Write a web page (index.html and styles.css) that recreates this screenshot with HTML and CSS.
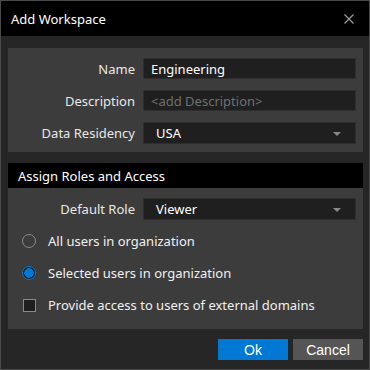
FILE: index.html
```html
<!DOCTYPE html>
<html>
<head>
<meta charset="utf-8">
<link rel="stylesheet" href="styles.css">
</head>
<body>
<div class="dialog">
  <div class="titlebar">
    <span class="title">Add Workspace</span>
    <svg class="close" width="10" height="10" viewBox="0 0 10 10"><path d="M0.5 0.5L9.5 9.5M9.5 0.5L0.5 9.5" stroke="#9a9a9a" stroke-width="1.3" fill="none"/></svg>
  </div>
  <div class="body">
    <div class="panel form">
      <label class="lbl">Name</label>
      <div class="field">Engineering</div>
      <label class="lbl">Description</label>
      <div class="field placeholder">&lt;add Description&gt;</div>
      <label class="lbl">Data Residency</label>
      <div class="field select">USA<span class="arrow"></span></div>
    </div>
    <div class="section">
      <div class="sec-head">Assign Roles and Access</div>
      <div class="panel access">
        <div class="form role">
          <label class="lbl">Default Role</label>
          <div class="field select">Viewer<span class="arrow"></span></div>
        </div>
        <div class="opt"><span class="radio"></span>All users in organization</div>
        <div class="opt"><span class="radio on"></span>Selected users in organization</div>
        <div class="opt"><span class="check"></span>Provide access to users of external domains</div>
      </div>
    </div>
    <div class="buttons">
      <button class="btn primary">Ok</button>
      <button class="btn">Cancel</button>
    </div>
  </div>
</div>
</body>
</html>
```
FILE: styles.css
```css
* { box-sizing: border-box; }
html, body { margin: 0; padding: 0; background: #252525; }
body { width: 370px; height: 370px; overflow: hidden; }
.dialog {
  width: 370px; height: 370px;
  border: 1px solid #4a4a4a;
  background: #262626;
  font-family: "Noto Sans", "Open Sans", sans-serif;
  color: #f0f0f0;
  display: flex; flex-direction: column;
}
.titlebar {
  height: 35px; background: #000;
  display: flex; align-items: center; justify-content: space-between;
  padding: 0 15px 0 10px;
}
.title { font-size: 13px; color: #fff; }
.body {
  flex: 1; padding: 12px 6px 0 7px;
  display: flex; flex-direction: column;
}
.panel { background: #3c3c3c; }
.form {
  display: grid;
  grid-template-columns: 127px 1fr;
  column-gap: 8px; row-gap: 11px;
  align-items: center;
  padding: 10px 7px 8px 0;
}
.lbl { text-align: right; font-size: 13px; color: #e8e8e8; }
.field {
  height: 21px; background: #1f1f1f;
  border: 1px solid #2e2e2e;
  font-size: 13px; color: #fff;
  display: flex; align-items: center; padding: 0 7px;
  position: relative;
}
.field.placeholder { color: #6f6f6f; }
.field.select { height: 22px; padding-left: 12px; }
.arrow {
  position: absolute; right: 14px; top: 9px;
  width: 0; height: 0;
  border-left: 4px solid transparent; border-right: 4px solid transparent;
  border-top: 4px solid #8a8a8a;
}
.section { margin-top: 11px; }
.sec-head {
  height: 25px; background: #000;
  font-size: 13px; color: #fff;
  display: flex; align-items: center; padding-left: 10px;
}
.access { padding-bottom: 8px; }
.role { padding-top: 10px; padding-bottom: 0; }
.opt {
  display: flex; align-items: center;
  height: 32px; padding-left: 14px;
  font-size: 13px; color: #f0f0f0;
}
.opt:nth-of-type(2) { margin-top: 5px; }
.radio {
  width: 14px; height: 14px; border-radius: 50%;
  border: 1px solid #8a8a8a; margin-right: 12px;
}
.radio.on {
  border: 1px solid #0078d4;
  background: radial-gradient(circle, #0078d4 0 4.5px, #1f1f1f 5px);
}
.check {
  width: 13px; height: 13px; background: #1f1f1f;
  border: 1px solid #8a8a8a; margin-left: 1px; margin-right: 12px;
}
.buttons {
  display: flex; justify-content: flex-end; gap: 5px;
  margin-top: 10px;
}
.btn {
  width: 70px; height: 21px; border: none;
  font-family: "Liberation Sans", Arial, sans-serif; font-size: 14px;
  color: #fff; background: #555; padding: 0;
}
.btn.primary { background: #0078d4; }
```
